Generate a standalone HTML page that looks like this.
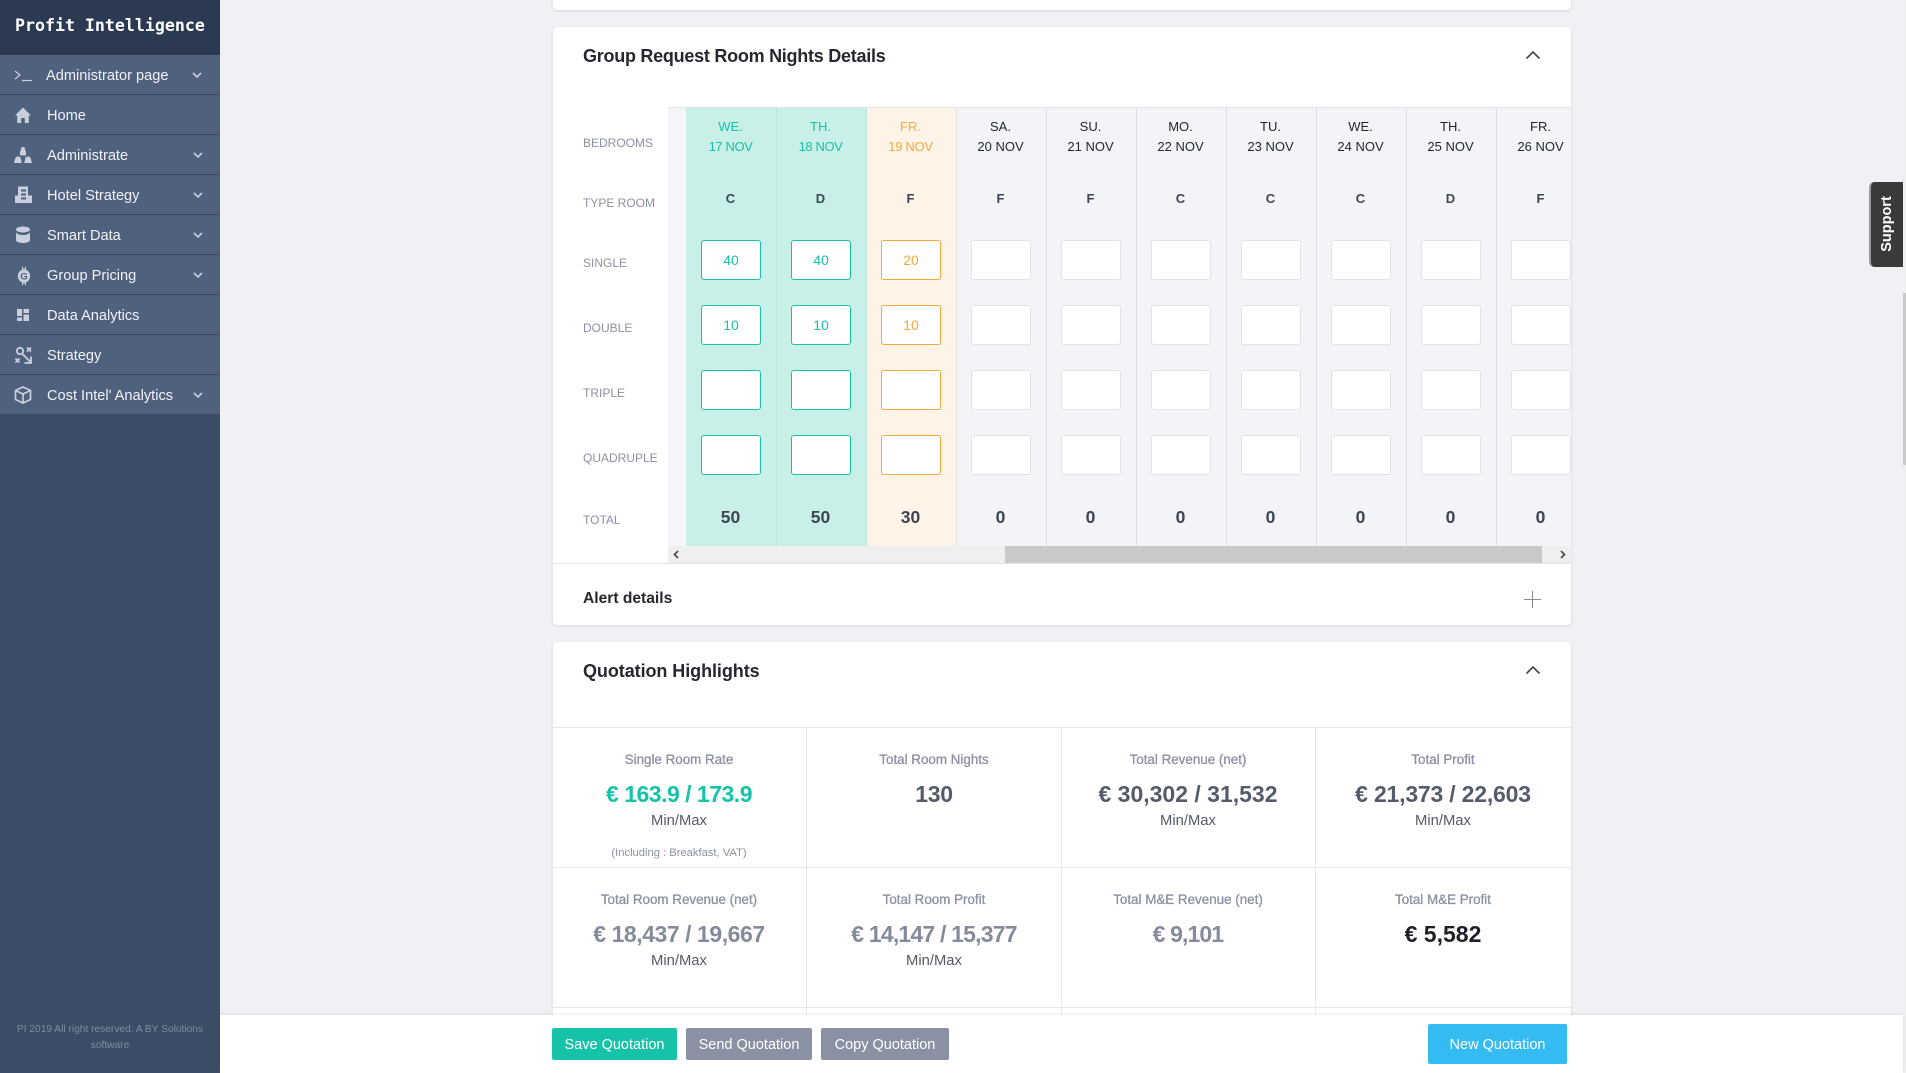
<!DOCTYPE html>
<html><head><meta charset="utf-8"><title>Profit Intelligence</title>
<style>
*{box-sizing:border-box;margin:0;padding:0}
html,body{width:1906px;height:1073px;overflow:hidden;background:#f0f1f5;font-family:"Liberation Sans",sans-serif;color:#3f4555}
.a{position:absolute}
#side{left:0;top:0;width:220px;height:1073px;background:#3a4c66}
#logo{left:0;top:0;width:220px;height:55px;background:#2b3a52;color:#fff;font:bold 16.6px/52px "DejaVu Sans Mono","Liberation Mono",monospace;padding-left:15px}
.m{left:0;width:220px;height:40px;background:#50617d;border-bottom:1px solid #3a4a64;color:#f0f2f7;font-size:14.6px;line-height:42px;padding-left:47px}
.m svg.i{position:absolute;left:11px;top:8px;width:24px;height:24px}
.m svg.ch{position:absolute;left:192px;top:16px;width:12px;height:8px}
#foot{left:0;top:1022px;width:220px;text-align:center;font-size:10.2px;line-height:15.5px;color:#7f8ba0;padding:0 12px}
.card{background:#fff;left:553px;width:1018px;border-radius:4px;box-shadow:0 1px 3px rgba(60,70,90,.14)}
.h{font-weight:bold;color:#24282f;font-size:18px;line-height:24px;white-space:nowrap}
.lb{left:583px;font-size:12px;line-height:20px;color:#8a91a3;white-space:nowrap}
#tb{left:668px;top:107px;width:903px;height:439px;overflow:hidden;background:#f4f5f9;border-top:1px solid #e2e4ea}
.col{position:absolute;top:0;width:90px;height:439px;background:#f3f4f8;border-right:1px solid #dcdfe6;color:#1f2430}
.col div{position:absolute;left:-1px;width:89px;text-align:center;white-space:nowrap}
.col .w{top:9px;font-size:13px;line-height:20px}
.col .n{top:29px;font-size:13px;line-height:20px}
.col .y{top:81px;font-size:13px;line-height:20px;font-weight:bold;color:#3f4555}
.col .b{left:14px;width:60px;height:40px;background:#fff;border:1px solid #e1e3e9;border-radius:3px;font-size:14px;line-height:38px}
.col .t{top:399px;font-size:17.5px;line-height:20px;font-weight:bold;color:#3f4555}
.r1{top:132px}.r2{top:197px}.r3{top:262px}.r4{top:327px}
.g{background:#c8f0e9;color:#17c3a8;border-right-color:#bfe3dd}
.g .b{border-color:#17c3a8}
.o{background:#fdf4e7;color:#f4a93a;border-right-color:#e6e2dc}
.o .b{border-color:#f4a93a}
.vl{top:727px;height:288px;width:1px;background:#e6e8ee}
.hl{left:553px;width:1018px;height:1px;background:#e6e8ee}
.q{width:250px;text-align:center;white-space:nowrap}
.q1{font-size:13.4px;line-height:20px;color:#8a91a3;-webkit-text-stroke:.3px #8a91a3}
.q2{font-size:23px;line-height:30px;font-weight:bold;color:#555b6a}
.q3{font-size:14.8px;line-height:20px;color:#555b66}
.btn{height:32px;border-radius:2px;color:#fff;font-size:14.5px;line-height:34px;text-align:center;white-space:nowrap}
</style></head><body>

<div class="a" id="side"></div>
<div class="a" id="logo">Profit Intelligence</div>

<div class="a m" style="top:55px;padding-left:46px">Administrator page
<svg class="i" style="left:12px" viewBox="0 0 24 24" fill="none" stroke="#c9cfdd" stroke-width="1.2"><path d="M3 8l5 4-5 4"/><path d="M10 17.5h10"/></svg>
<svg class="ch" style="left:191px" viewBox="0 0 12 8" fill="none" stroke="#c9cfdd" stroke-width="1.6"><path d="M2 2l4 4 4-4"/></svg></div>

<div class="a m" style="top:95px">Home
<svg class="i" viewBox="0 0 24 24" fill="#c9cfdd"><path d="M12 4.500L4 12.500h2.200V20h4v-5h3.600v5h4v-7.500H20z"/></svg></div>

<div class="a m" style="top:135px">Administrate
<svg class="i" viewBox="0 0 24 24" fill="#c9cfdd"><path d="M12 4a2.200 2.200 0 0 1 2.200 2.200V8h.8v4.500H9V8h.8V6.200A2.200 2.200 0 0 1 12 4zM7.500 13.500A2.300 2.300 0 0 1 9.600 15l1.200 5H3l1.200-4.500a3 3 0 0 1 3.300-2zM16.500 13.500a3 3 0 0 1 3.300 2L21 20h-7.800l1.200-5a2.300 2.300 0 0 1 2.100-1.500z"/></svg>
<svg class="ch" viewBox="0 0 12 8" fill="none" stroke="#c9cfdd" stroke-width="1.6"><path d="M2 2l4 4 4-4"/></svg></div>

<div class="a m" style="top:175px">Hotel Strategy
<svg class="i" viewBox="0 0 24 24" fill="#c9cfdd"><path fill-rule="evenodd" d="M7 3.500h10v9h4V20H4v-7.500h3zM10 6.500v2h5v-2zM10 10.500v2h5v-2zM10 14.500v2h5v-2z"/></svg>
<svg class="ch" viewBox="0 0 12 8" fill="none" stroke="#c9cfdd" stroke-width="1.6"><path d="M2 2l4 4 4-4"/></svg></div>

<div class="a m" style="top:215px">Smart Data
<svg class="i" viewBox="0 0 24 24" fill="#c9cfdd"><ellipse cx="12" cy="6.500" rx="7" ry="3"/><path d="M5 9.500c1.500 1.800 4 2.500 7 2.500s5.500-.7 7-2.500V17c0 1.800-3 3-7 3s-7-1.200-7-3z"/></svg>
<svg class="ch" viewBox="0 0 12 8" fill="none" stroke="#c9cfdd" stroke-width="1.6"><path d="M2 2l4 4 4-4"/></svg></div>

<div class="a m" style="top:255px">Group Pricing
<svg class="i" style="left:12px;top:9px" viewBox="0 0 24 24"><path fill="#c9cfdd" d="M10 3h1.300v2.200h1.400V3H14v2.600a7 7 0 0 1 0 12.800V21h-1.300v-2.200h-1.400V21H10v-2.600a7 7 0 0 1 0-12.800z"/><text x="12" y="15.500" text-anchor="middle" font-family="Liberation Sans" font-weight="bold" font-size="9.500" fill="#50617d">G</text></svg>
<svg class="ch" viewBox="0 0 12 8" fill="none" stroke="#c9cfdd" stroke-width="1.6"><path d="M2 2l4 4 4-4"/></svg></div>

<div class="a m" style="top:295px">Data Analytics
<svg class="i" viewBox="0 0 24 24" fill="#c9cfdd"><path d="M6 6h5v7H6zM12.500 6H18v4h-5.500zM12.500 11.500H18V18h-5.500zM6 14.500h5V18H6z"/></svg></div>

<div class="a m" style="top:335px">Strategy
<svg class="i" viewBox="0 0 24 24" fill="none" stroke="#c9cfdd" stroke-width="1.800"><circle cx="9" cy="8" r="3.200"/><path d="M16 4.500l4 4M20 4.500l-4 4M4.500 15.500l4 4M8.500 15.500l-4 4M11.500 11l8 8M20 13.500V20h-6.500"/></svg></div>

<div class="a m" style="top:375px">Cost Intel' Analytics
<svg class="i" viewBox="0 0 24 24" fill="none" stroke="#c9cfdd" stroke-width="1.700"><path d="M12 4l7.500 3.500v9L12 20l-7.500-3.500v-9z"/><path d="M4.500 7.500L12 11l7.500-3.500M12 11v9"/></svg>
<svg class="ch" viewBox="0 0 12 8" fill="none" stroke="#c9cfdd" stroke-width="1.6"><path d="M2 2l4 4 4-4"/></svg></div>

<div class="a" id="foot">PI 2019 All right reserved. A BY Solutions software</div>

<!-- cards -->
<div class="a card" style="top:-20px;height:30px"></div>
<div class="a card" style="top:27px;height:598px"></div>
<div class="a card" style="top:642px;height:431px"></div>

<div class="a h" style="left:583px;top:44px;letter-spacing:-.26px">Group Request Room Nights Details</div>
<svg class="a" style="left:1525px;top:49px" width="16" height="12" viewBox="0 0 16 12" fill="none" stroke="#444" stroke-width="1.600"><path d="M1.500 9.500L8 3l6.500 6.500"/></svg>

<div class="a lb" style="top:133px">BEDROOMS</div>
<div class="a lb" style="top:193px">TYPE ROOM</div>
<div class="a lb" style="top:253px">SINGLE</div>
<div class="a lb" style="top:318px">DOUBLE</div>
<div class="a lb" style="top:383px">TRIPLE</div>
<div class="a lb" style="top:448px">QUADRUPLE</div>
<div class="a lb" style="top:510px">TOTAL</div>

<div class="a" id="tb">
<div class="col g" style="left:19px;box-shadow:-1px 0 0 #c8f0e9"><div class="w">WE.</div><div class="n" style="letter-spacing:-.4px">17 NOV</div><div class="y">C</div><div class="b r1">40</div><div class="b r2">10</div><div class="b r3"></div><div class="b r4"></div><div class="t">50</div></div>
<div class="col g" style="left:109px"><div class="w">TH.</div><div class="n" style="letter-spacing:-.4px">18 NOV</div><div class="y">D</div><div class="b r1">40</div><div class="b r2">10</div><div class="b r3"></div><div class="b r4"></div><div class="t">50</div></div>
<div class="col o" style="left:199px"><div class="w">FR.</div><div class="n" style="letter-spacing:-.3px">19 NOV</div><div class="y">F</div><div class="b r1">20</div><div class="b r2">10</div><div class="b r3"></div><div class="b r4"></div><div class="t">30</div></div>
<div class="col" style="left:289px"><div class="w">SA.</div><div class="n">20 NOV</div><div class="y">F</div><div class="b r1"></div><div class="b r2"></div><div class="b r3"></div><div class="b r4"></div><div class="t">0</div></div>
<div class="col" style="left:379px"><div class="w">SU.</div><div class="n">21 NOV</div><div class="y">F</div><div class="b r1"></div><div class="b r2"></div><div class="b r3"></div><div class="b r4"></div><div class="t">0</div></div>
<div class="col" style="left:469px"><div class="w">MO.</div><div class="n">22 NOV</div><div class="y">C</div><div class="b r1"></div><div class="b r2"></div><div class="b r3"></div><div class="b r4"></div><div class="t">0</div></div>
<div class="col" style="left:559px"><div class="w">TU.</div><div class="n">23 NOV</div><div class="y">C</div><div class="b r1"></div><div class="b r2"></div><div class="b r3"></div><div class="b r4"></div><div class="t">0</div></div>
<div class="col" style="left:649px"><div class="w">WE.</div><div class="n">24 NOV</div><div class="y">C</div><div class="b r1"></div><div class="b r2"></div><div class="b r3"></div><div class="b r4"></div><div class="t">0</div></div>
<div class="col" style="left:739px"><div class="w">TH.</div><div class="n">25 NOV</div><div class="y">D</div><div class="b r1"></div><div class="b r2"></div><div class="b r3"></div><div class="b r4"></div><div class="t">0</div></div>
<div class="col" style="left:829px"><div class="w">FR.</div><div class="n">26 NOV</div><div class="y">F</div><div class="b r1"></div><div class="b r2"></div><div class="b r3"></div><div class="b r4"></div><div class="t">0</div></div>
</div>

<div class="a" style="left:668px;top:546px;width:903px;height:17px;background:#efefef"></div>
<div class="a" style="left:1005px;top:546px;width:537px;height:17px;background:#c9c9c9"></div>
<svg class="a" style="left:671px;top:549px" width="10" height="11" viewBox="0 0 10 11" fill="none" stroke="#505050" stroke-width="1.800"><path d="M7 2L3.500 5.500 7 9"/></svg>
<svg class="a" style="left:1558px;top:549px" width="10" height="11" viewBox="0 0 10 11" fill="none" stroke="#505050" stroke-width="1.800"><path d="M3 2l3.500 3.500L3 9"/></svg>
<div class="a hl" style="top:563px;background:#e2e4ea"></div>

<div class="a h" style="left:583px;top:587px;font-size:15.6px">Alert details</div>
<svg class="a" style="left:1524px;top:591px" width="18" height="18" viewBox="0 0 18 18" stroke="#8a8a8a" stroke-width="1"><path d="M0 8.500h17M8.500 0v17"/></svg>

<div class="a h" style="left:583px;top:659px;letter-spacing:-.07px">Quotation Highlights</div>
<svg class="a" style="left:1525px;top:664px" width="16" height="12" viewBox="0 0 16 12" fill="none" stroke="#444" stroke-width="1.600"><path d="M1.500 9.500L8 3l6.500 6.500"/></svg>

<div class="a hl" style="top:727px"></div>
<div class="a hl" style="top:867px"></div>
<div class="a hl" style="top:1007px"></div>
<div class="a vl" style="left:806px"></div>
<div class="a vl" style="left:1061px"></div>
<div class="a vl" style="left:1315px"></div>

<div class="a q q1" style="left:554px;top:750px">Single Room Rate</div>
<div class="a q q2" style="left:554px;top:779px;color:#17c3a8;letter-spacing:-.5px">€ 163.9 / 173.9</div>
<div class="a q q3" style="left:554px;top:811px">Min/Max</div>
<div class="a q" style="left:554px;top:846px;font-size:11.2px;line-height:14px;color:#8a91a3">(Including : Breakfast, VAT)</div>

<div class="a q q1" style="left:809px;top:750px">Total Room Nights</div>
<div class="a q q2" style="left:809px;top:779px;letter-spacing:-.3px">130</div>

<div class="a q q1" style="left:1063px;top:750px">Total Revenue (net)</div>
<div class="a q q2" style="left:1063px;top:779px">€ 30,302 / 31,532</div>
<div class="a q q3" style="left:1063px;top:811px">Min/Max</div>

<div class="a q q1" style="left:1318px;top:750px">Total Profit</div>
<div class="a q q2" style="left:1318px;top:779px;letter-spacing:-.2px">€ 21,373 / 22,603</div>
<div class="a q q3" style="left:1318px;top:811px">Min/Max</div>

<div class="a q q1" style="left:554px;top:890px">Total Room Revenue (net)</div>
<div class="a q q2" style="left:554px;top:919px;color:#858b9b;letter-spacing:-.45px">€ 18,437 / 19,667</div>
<div class="a q q3" style="left:554px;top:951px">Min/Max</div>

<div class="a q q1" style="left:809px;top:890px">Total Room Profit</div>
<div class="a q q2" style="left:809px;top:919px;color:#858b9b;letter-spacing:-.8px">€ 14,147 / 15,377</div>
<div class="a q q3" style="left:809px;top:951px">Min/Max</div>

<div class="a q q1" style="left:1063px;top:890px">Total M&amp;E Revenue (net)</div>
<div class="a q q2" style="left:1063px;top:919px;color:#858b9b;letter-spacing:-.9px">€ 9,101</div>

<div class="a q q1" style="left:1318px;top:890px">Total M&amp;E Profit</div>
<div class="a q q2" style="left:1318px;top:919px;color:#1d2026">€ 5,582</div>

<!-- support -->
<div class="a" style="left:1869px;top:182px;width:34px;height:85px;background:#3a3a3a;border-left:2px solid #9b9b9b;border-radius:5px 0 0 5px"></div>
<div class="a" style="left:1847px;top:214px;width:80px;height:20px;line-height:20px;text-align:center;color:#fff;font-weight:bold;font-size:14.5px;transform:rotate(-90deg)">Support</div>

<!-- page scrollbar -->
<div class="a" style="left:1903px;top:0;width:3px;height:1073px;background:#f0f0f0"></div>
<div class="a" style="left:1903px;top:293px;width:3px;height:172px;background:#c9c9c9"></div>

<!-- bottom bar -->
<div class="a" style="left:220px;top:1015px;width:1683px;height:58px;background:#fff;box-shadow:0 -1px 3px rgba(60,70,90,.1)"></div>
<div class="a btn" style="left:552px;top:1028px;width:125px;background:#17c3a8">Save Quotation</div>
<div class="a btn" style="left:686px;top:1028px;width:126px;background:#8a91a3">Send Quotation</div>
<div class="a btn" style="left:821px;top:1028px;width:128px;background:#8a91a3">Copy Quotation</div>
<div class="a btn" style="left:1428px;top:1024px;width:139px;height:40px;line-height:42px;background:#33bbf2">New Quotation</div>
</body></html>
